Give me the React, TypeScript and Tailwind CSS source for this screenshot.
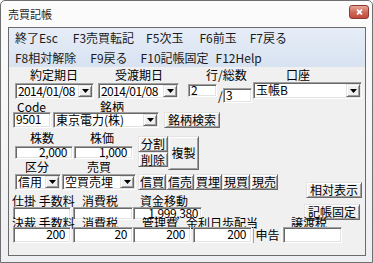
import type { ReactNode } from "react"

type BoxProps = {
  className?: string
  children?: ReactNode
}

function Btn({ className = "", children }: BoxProps) {
  return (
    <div
      className={`flex items-center justify-center bg-[#f0f0f0] border border-t-[#e3e3e3] border-l-[#e3e3e3] border-r-[#696969] border-b-[#696969] shadow-[inset_1px_1px_0_#ffffff,inset_-1px_-1px_0_#a0a0a0] text-[12px] leading-none whitespace-nowrap ${className}`}
    >
      {children}
    </div>
  )
}

function Field({ className = "", children }: BoxProps) {
  return (
    <div
      className={`flex items-center bg-white border border-t-[#a0a0a0] border-l-[#a0a0a0] border-r-white border-b-white shadow-[inset_1px_1px_0_#696969,inset_-1px_-1px_0_#e3e3e3] text-[12px] leading-none whitespace-nowrap ${className}`}
    >
      {children}
    </div>
  )
}

function Combo({ className = "", children }: BoxProps) {
  return (
    <Field className={`justify-between pl-[2px] ${className}`}>
      <span className="pb-[1px]">{children}</span>
      <div className="h-full py-[1px] pr-[1px]">
        <div className="h-full w-[14px] flex items-center justify-center bg-[#f0f0f0] border border-t-[#e3e3e3] border-l-[#e3e3e3] border-r-[#696969] border-b-[#696969] shadow-[inset_1px_1px_0_#ffffff,inset_-1px_-1px_0_#a0a0a0]">
          <svg width="7" height="4" viewBox="0 0 7 4">
            <path d="M0 0h7L3.5 4z" fill="#000" />
          </svg>
        </div>
      </div>
    </Field>
  )
}

function Label({ className = "", children }: BoxProps) {
  return (
    <div className={`text-[12px] leading-none whitespace-nowrap ${className}`}>{children}</div>
  )
}

export default function App() {
  return (
    <div className="w-[373px] h-[263px] font-['Noto_Sans_CJK_JP',sans-serif] text-black">
      <div className="relative w-full h-full border border-[#6f6f6f] rounded-t-[5px] bg-gradient-to-b from-[#fcfcfc] to-[#eeeff2] flex flex-col">
        {/* TITLE */}
        <div className="h-[26px] flex items-center pl-[7px] text-[11px] leading-none text-[#1e1e1e]">
          売買記帳
        </div>
        <div className="absolute top-[4px] right-[3px] w-[20px] h-[14px] rounded-[3px] border border-[#8a3b33] bg-gradient-to-b from-[#e9a89b] via-[#d0695a] to-[#c04a3c] flex items-center justify-center">
          <svg width="7" height="6" viewBox="0 0 7 6">
            <path d="M1 0.5l5 5M6 0.5l-5 5" stroke="#fff" strokeWidth="1.8" />
          </svg>
        </div>

        {/* CLIENT */}
        <div className="ml-[7px] mr-[6px] h-[229px] border border-[#6b6b6b] bg-[#f0f0f0] flex flex-col">
          {/* MENU */}
          <div className="h-[39px] bg-gradient-to-b from-[#e6edf7] to-[#d8e2f1] text-[12px] leading-none text-[#1a1a1a]">
            <div className="h-[20px] flex items-center">
              <span className="ml-[6px]">終了Esc</span>
              <span className="ml-[15px]">F3売買転記</span>
              <span className="ml-[12px]">F5次玉</span>
              <span className="ml-[16px]">F6前玉</span>
              <span className="ml-[13px]">F7戻る</span>
            </div>
            <div className="h-[19px] flex items-center">
              <span className="ml-[6px]">F8相対解除</span>
              <span className="ml-[14px]">F9戻る</span>
              <span className="ml-[13px]">F10記帳固定</span>
              <span className="ml-[7px]">F12Help</span>
            </div>
          </div>

          {/* FORM */}
          <div className="flex flex-col pt-[1px]">
            {/* row A */}
            <div className="h-[14px] flex items-center">
              <Label className="ml-[21px] w-[48px]">約定期日</Label>
              <Label className="ml-[37px] w-[48px]">受渡期日</Label>
              <Label className="ml-[43px] w-[48px]">行/総数</Label>
              <Label className="ml-[32px] w-[30px]">口座</Label>
            </div>
            {/* row B */}
            <div className="h-[19px] flex items-start tracking-[-0.6px]">
              <Combo className="ml-[6px] mt-[1px] w-[79px] h-[16px]">2014/01/08</Combo>
              <Combo className="ml-[4px] mt-[1px] w-[81px] h-[16px]">2014/01/08</Combo>
              <Field className="ml-[9px] mt-[2px] w-[29px] h-[13px] pl-[2px] pb-[2px]">2</Field>
              <Label className="mt-[8px] w-[6px] text-center">/</Label>
              <Field className="mt-[6px] w-[29px] h-[15px] pl-[2px] pb-[2px]">3</Field>
              <Combo className="ml-[1px] w-[109px] h-[17px] tracking-normal">玉帳B</Combo>
            </div>
            {/* row C */}
            <div className="h-[11px] flex items-center">
              <Label className="ml-[8px] w-[40px]">Code</Label>
              <Label className="ml-[43px] w-[30px]">銘柄</Label>
            </div>
            {/* row D */}
            <div className="h-[16px] flex items-start">
              <Field className="ml-[4px] w-[38px] h-[16px] pl-[2px] pb-[2px] tracking-[-0.4px]">9501</Field>
              <Combo className="ml-[2px] w-[106px] h-[16px]">東京電力(株)</Combo>
              <Btn className="ml-[5px] w-[56px] h-[16px]">銘柄検索</Btn>
            </div>

            {/* section 2 */}
            <div className="flex">
              <div className="w-[295px] flex flex-col">
                <div className="flex">
                  <div className="w-[124px] flex flex-col pt-[2px]">
                    <div className="h-[16px] flex items-center">
                      <Label className="ml-[21px] w-[30px]">株数</Label>
                      <Label className="ml-[30px] w-[30px]">株価</Label>
                    </div>
                    <div className="h-[13px] flex tracking-[-0.4px]">
                      <Field className="ml-[6px] w-[58px] h-[13px] justify-end pr-[5px] pb-[2px]">2,000</Field>
                      <Field className="ml-[1px] w-[59px] h-[13px] justify-end pr-[5px] pb-[2px]">1,000</Field>
                    </div>
                    <div className="h-[15px] flex items-center">
                      <Label className="ml-[16px] w-[30px]">区分</Label>
                      <Label className="ml-[32px] w-[30px]">売買</Label>
                    </div>
                  </div>
                  <div className="ml-[5px] pt-[8px] flex flex-col">
                    <Btn className="w-[30px] h-[16px]">分割</Btn>
                    <Btn className="w-[30px] h-[15px]">削除</Btn>
                  </div>
                  <div className="pt-[8px]">
                    <Btn className="w-[31px] h-[34px]">複製</Btn>
                  </div>
                </div>
                {/* row H */}
                <div className="h-[16px] flex">
                  <Combo className="ml-[6px] w-[46px] h-[16px]">信用</Combo>
                  <Combo className="ml-[1px] w-[74px] h-[16px]">空買売埋</Combo>
                  <Btn className="ml-[2px] w-[28px] h-[16px]">信買</Btn>
                  <Btn className="w-[28px] h-[16px]">信売</Btn>
                  <Btn className="w-[28px] h-[16px]">買埋</Btn>
                  <Btn className="w-[28px] h-[16px]">現買</Btn>
                  <Btn className="w-[28px] h-[16px]">現売</Btn>
                </div>
                {/* row I */}
                <div className="h-[17px] pt-[5px] flex items-center">
                  <Label className="ml-[3px] w-[64px]">仕掛 手数料</Label>
                  <Label className="ml-[6px] w-[40px]">消費税</Label>
                  <Label className="ml-[18px] w-[56px]">資金移動</Label>
                </div>
                {/* row J */}
                <div className="h-[13px] flex tracking-[-0.4px]">
                  <Field className="ml-[4px] w-[58px] h-[13px]" />
                  <Field className="ml-[2px] w-[60px] h-[13px]" />
                  <Field className="w-[69px] h-[13px] justify-end pr-[3px] pb-[2px]">1,999,380</Field>
                </div>
              </div>
              <div className="flex flex-col">
                <Btn className="ml-[2px] mt-[54px] w-[56px] h-[16px]">相対表示</Btn>
                <Btn className="mt-[6px] w-[56px] h-[16px]">記帳固定</Btn>
              </div>
            </div>

            {/* row K */}
            <div className="-mt-[3px] h-[12px] flex items-center">
              <Label className="ml-[3px] w-[64px]">決裁 手数料</Label>
              <Label className="ml-[6px] w-[40px]">消費税</Label>
              <Label className="ml-[20px] w-[40px]">管理費</Label>
              <Label className="ml-[4px] w-[80px]">金利日歩配当</Label>
              <Label className="ml-[25px] w-[40px]">譲渡税</Label>
            </div>
            {/* row L */}
            <div className="-mt-[2px] h-[16px] flex tracking-[-0.4px]">
              <Field className="ml-[4px] w-[58px] h-[16px] justify-end pr-[5px] pb-[2px]">200</Field>
              <Field className="ml-[2px] w-[60px] h-[16px] justify-end pr-[5px] pb-[2px]">20</Field>
              <Field className="w-[58px] h-[16px] justify-end pr-[5px] pb-[2px]">200</Field>
              <Field className="ml-[2px] w-[59px] h-[16px] justify-end pr-[5px] pb-[2px]">200</Field>
              <div className="ml-[1px] w-[29px] h-[16px] flex items-center justify-center border-l border-l-[#a0a0a0] border-r border-r-white text-[12px] leading-none tracking-normal">
                申告
              </div>
              <Field className="ml-[1px] w-[59px] h-[16px]" />
            </div>
          </div>
        </div>
      </div>
    </div>
  )
}
